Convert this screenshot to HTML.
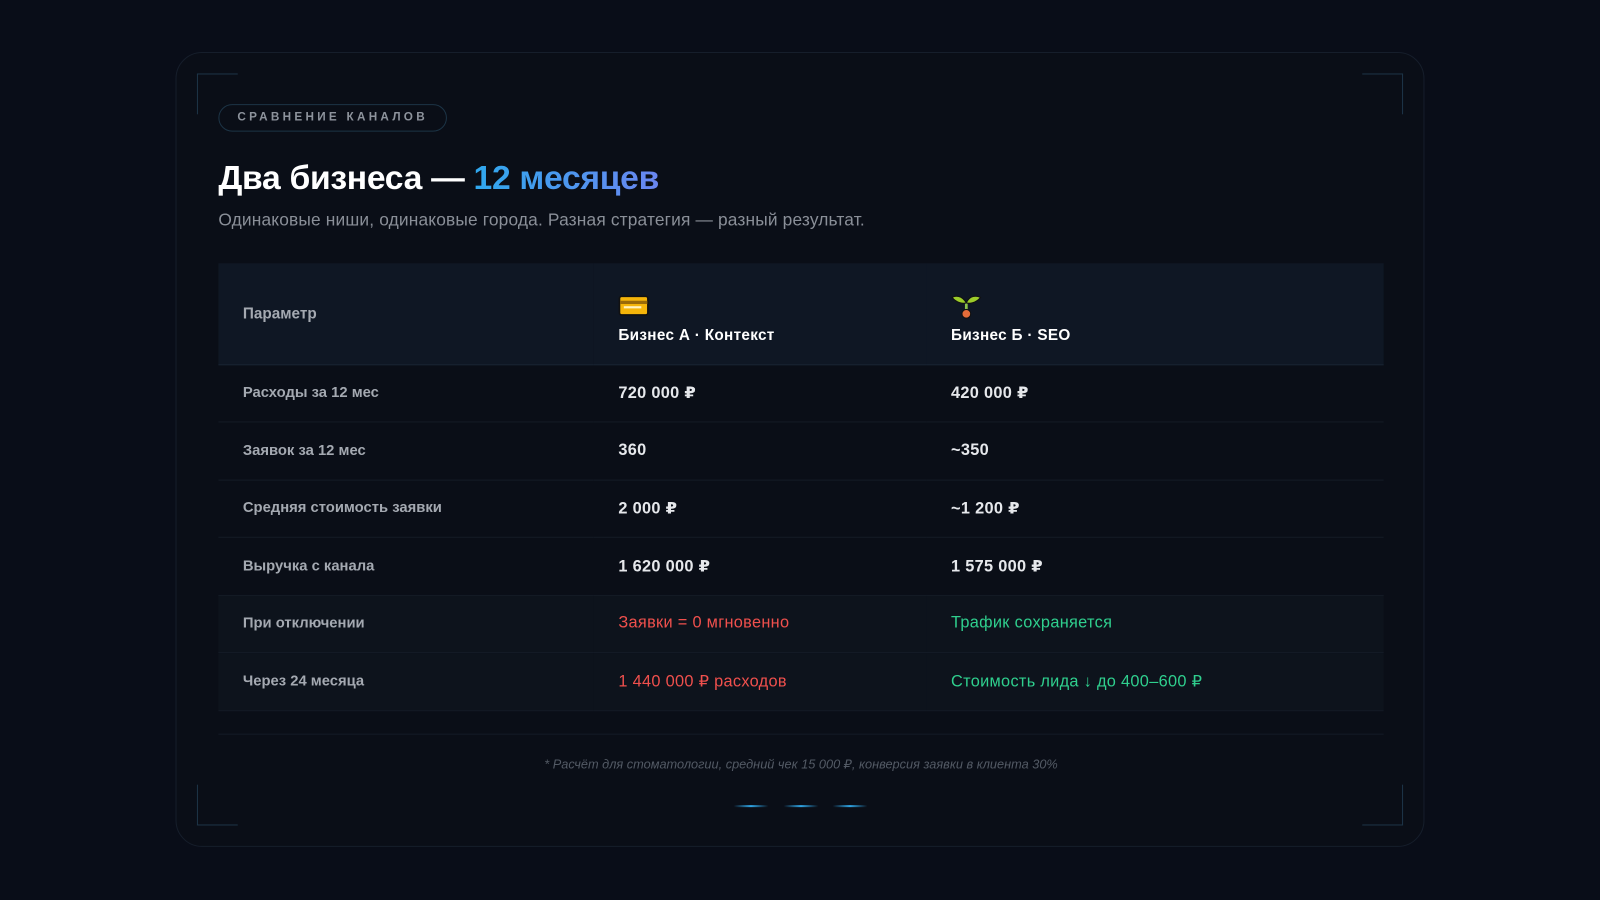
<!DOCTYPE html>
<html><head><meta charset="utf-8"><style>
*{margin:0;padding:0;box-sizing:border-box}
body{width:1600px;height:900px;background:#090d18;font-family:"Liberation Sans","DejaVu Sans",sans-serif;position:relative;overflow:hidden}
.wrap{position:absolute;left:0;top:0;width:1568px;height:882px;transform:scale(1.0204);transform-origin:0 0}
.card{position:absolute;left:172px;top:51px;width:1224px;height:779px;border:1px solid #161e2b;border-radius:26px;background:#0a0e17}
.c{position:absolute;width:40px;height:40px;border-color:#1d3447;border-style:solid;border-width:0}
.badge{position:absolute;left:41px;top:50px;width:224px;height:27px;border:1px solid #1c3446;border-radius:14px;color:#8d939c;font-size:11.5px;font-weight:bold;letter-spacing:3.2px;text-align:center;line-height:25px}
h1{position:absolute;left:41px;top:103px;font-size:33px;font-weight:bold;color:#fff;letter-spacing:-0.3px;white-space:nowrap}
h1 span{background:linear-gradient(90deg,#2fa8ee,#6a86f0);-webkit-background-clip:text;color:transparent}
.sub{position:absolute;left:41px;top:154px;font-size:17px;letter-spacing:0.15px;color:#8a8f98;white-space:nowrap}
table{position:absolute;left:41px;top:206px;width:1142px;border-collapse:collapse}
td{font-size:16px;font-weight:bold;color:#e6e8ec;height:56.5px;border-bottom:1px solid #141b26;padding-left:24px;letter-spacing:0.3px}
td:first-child{color:#a4a9b1;width:368px;font-size:14.5px;letter-spacing:0}
td:nth-child(2){width:326px}
tr.h td{height:99px;background:#0f1724;color:#fff;vertical-align:bottom;padding-bottom:20px;border-bottom:1px solid #1a2636;font-size:15px}
tr.h td:first-child{vertical-align:middle;padding-bottom:0;color:#a4a9b1}
tr.hl td{background:#0d131c}
.r{color:#f0504d!important;font-weight:normal!important;font-size:16px!important}
.g{color:#2fcf8e!important;font-weight:normal!important;font-size:16px!important}
.ic{display:block;margin-bottom:6px;height:30px}
.foot{position:absolute;left:41px;top:667px;width:1142px;border-top:1px solid #141b26}
.note{position:absolute;left:0;width:1224px;top:689px;text-align:center;font-size:12.5px;font-style:italic;color:#535a65}
.dash{position:absolute;top:737px;height:2px;width:34px;background:linear-gradient(90deg,transparent,#2fa5e6,transparent)}
</style></head><body>
<div class="wrap">
<div class="card">
<div class="c" style="left:20px;top:20px;border-left-width:1px;border-top-width:1px"></div>
<div class="c" style="right:20px;top:20px;border-right-width:1px;border-top-width:1px"></div>
<div class="c" style="left:20px;bottom:20px;border-left-width:1px;border-bottom-width:1px"></div>
<div class="c" style="right:20px;bottom:20px;border-right-width:1px;border-bottom-width:1px"></div>
<div class="badge">СРАВНЕНИЕ КАНАЛОВ</div>
<h1>Два бизнеса — <span>12 месяцев</span></h1>
<div class="sub">Одинаковые ниши, одинаковые города. Разная стратегия — разный результат.</div>
<table>
<tr class="h"><td>Параметр</td><td><span class="ic"><svg width="30" height="30" viewBox="0 0 28 28"><rect x="1" y="6" width="26" height="17" rx="2" fill="#f5b50a" stroke="#111" stroke-width="1.5"/><rect x="1.5" y="10" width="25" height="3" fill="#9a6a08"/><rect x="5" y="15" width="16" height="2" fill="#fff3c0"/></svg></span>Бизнес А · Контекст</td><td><span class="ic"><svg width="30" height="30" viewBox="0 0 28 28"><path d="M14 22V12" stroke="#8bc34a" stroke-width="2.5"/><path d="M14 12C10 5 4 5 1 7 5 12 11 13 14 12Z" fill="#9ccc2a" stroke="#111"/><path d="M14 12C17 5 23 5 27 7 23 12 17 13 14 12Z" fill="#9ccc2a" stroke="#111"/><circle cx="14" cy="22" r="4" fill="#e46c3a" stroke="#111"/></svg></span>Бизнес Б · SEO</td></tr>
<tr><td>Расходы за 12 мес</td><td>720 000 ₽</td><td>420 000 ₽</td></tr>
<tr><td>Заявок за 12 мес</td><td>360</td><td>~350</td></tr>
<tr><td>Средняя стоимость заявки</td><td>2 000 ₽</td><td>~1 200 ₽</td></tr>
<tr><td>Выручка с канала</td><td>1 620 000 ₽</td><td>1 575 000 ₽</td></tr>
<tr class="hl"><td>При отключении</td><td class="r">Заявки = 0 мгновенно</td><td class="g">Трафик сохраняется</td></tr>
<tr class="hl"><td>Через 24 месяца</td><td class="r">1 440 000 ₽ расходов</td><td class="g">Стоимость лида ↓ до 400–600 ₽</td></tr>
</table>
<div class="foot"></div>
<div class="note">* Расчёт для стоматологии, средний чек 15 000 ₽, конверсия заявки в клиента 30%</div>
<div class="dash" style="left:546px"></div><div class="dash" style="left:595px"></div><div class="dash" style="left:643px"></div>
</div>
</div>
</body></html>
